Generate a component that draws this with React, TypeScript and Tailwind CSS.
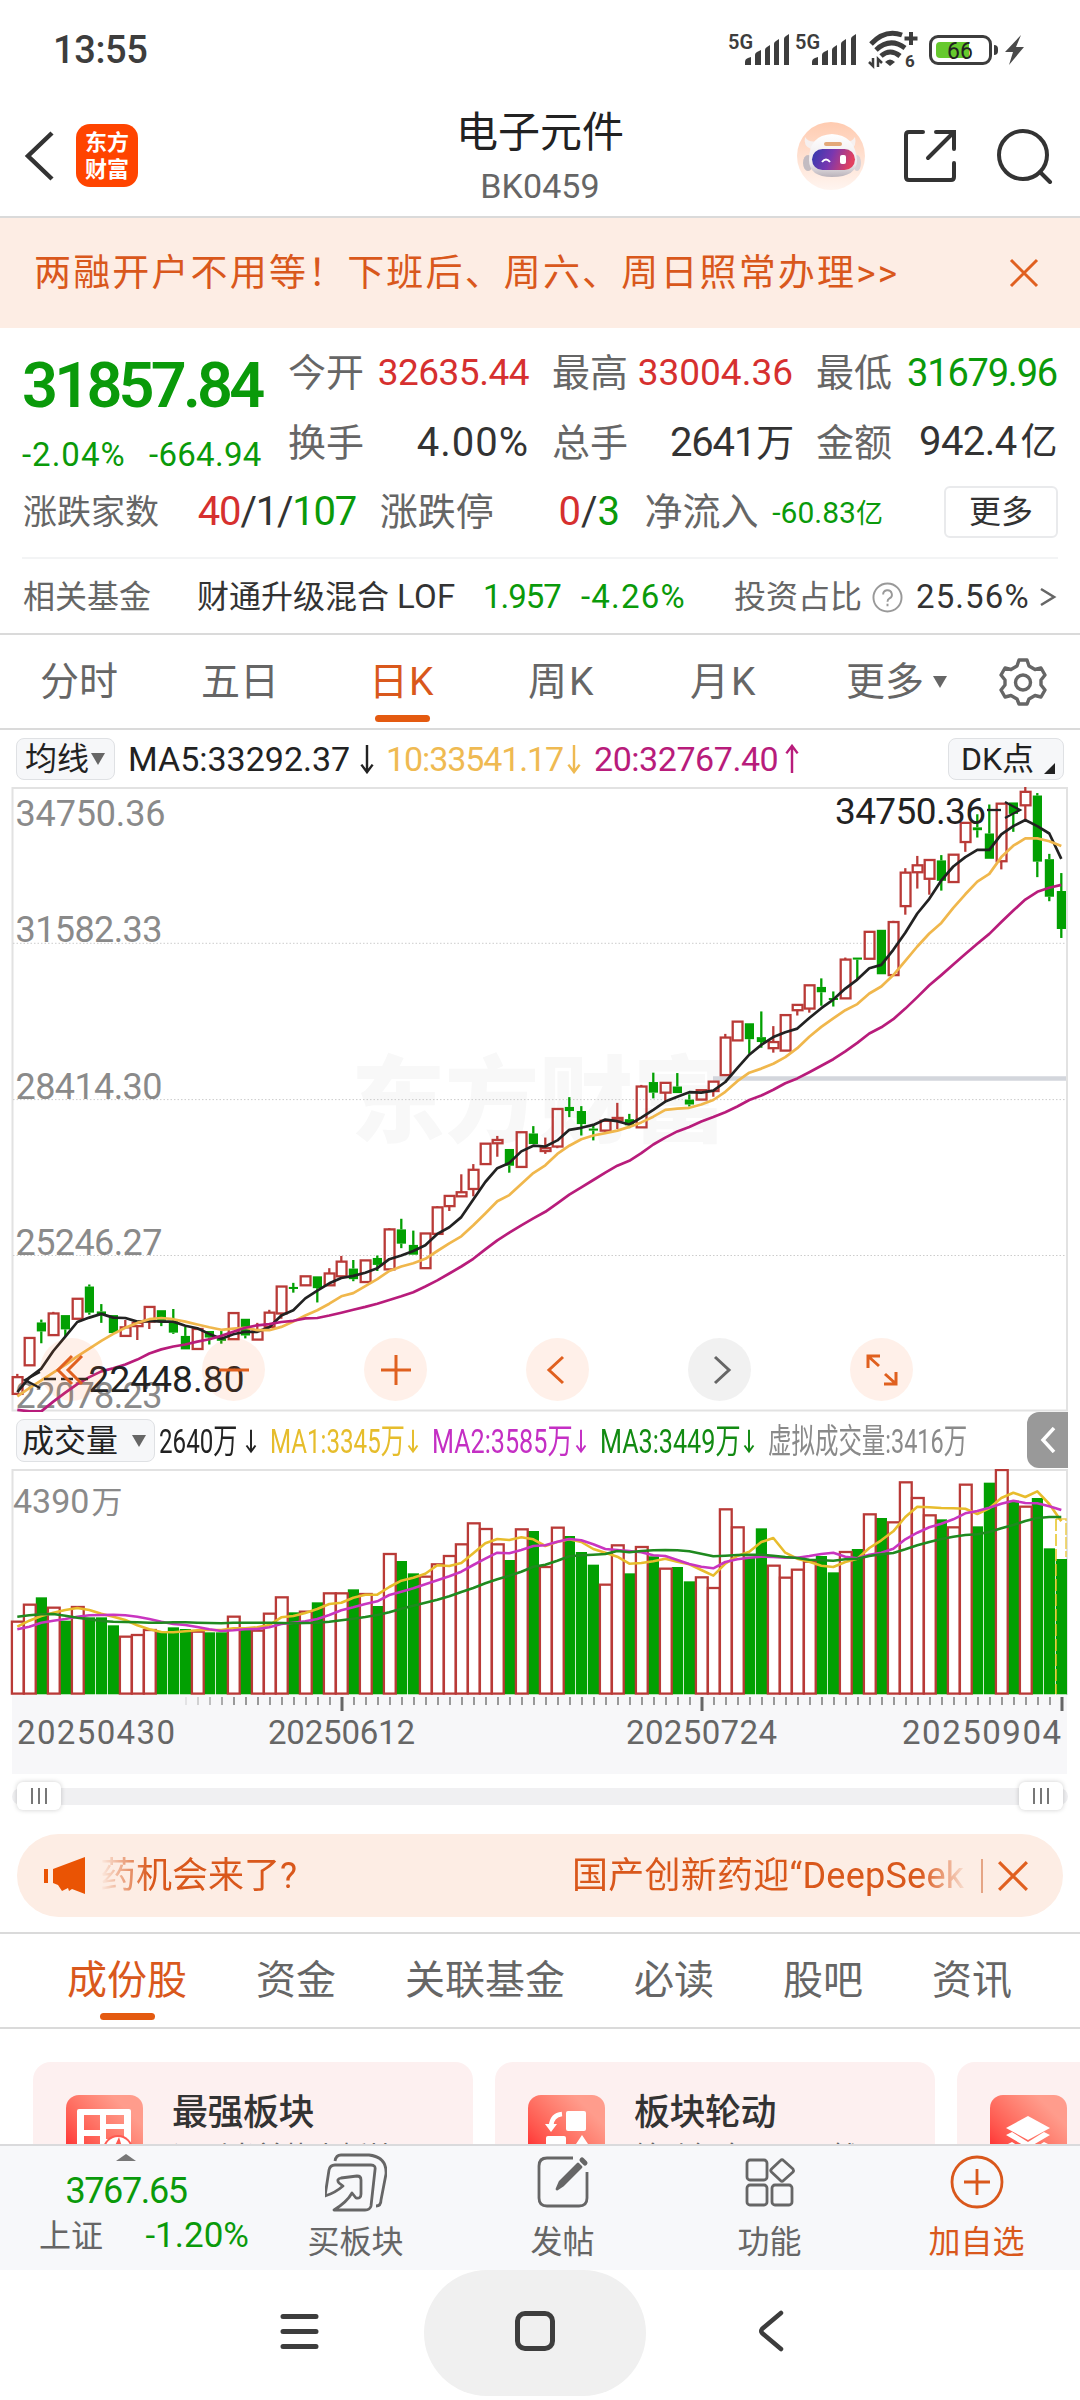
import type { ReactNode } from 'react';

const RED = '#b93a37';
const GREEN = '#02a002';

// up = hollow red, down = solid green; body top, body bottom, high, low
type Candle = ['u' | 'd', number, number, number, number];

const CANDLES: Candle[] = [
    ['u', 1463, 1504, 1455, 1504], ['u', 1367, 1434, 1367, 1434], ['d', 1329, 1351, 1322, 1380], ['u', 1307, 1360, 1303, 1360],
    ['d', 1311, 1346, 1311, 1363], ['u', 1271, 1320, 1271, 1320], ['d', 1241, 1305, 1236, 1310], ['d', 1302, 1310, 1284, 1330],
    ['d', 1311, 1355, 1311, 1355], ['u', 1341, 1362, 1323, 1362], ['u', 1330, 1338, 1330, 1372], ['u', 1291, 1327, 1291, 1345],
    ['d', 1299, 1325, 1299, 1338], ['d', 1325, 1354, 1296, 1357], ['d', 1362, 1395, 1340, 1395], ['u', 1345, 1394, 1345, 1394],
    ['d', 1350, 1366, 1350, 1383], ['d', 1368, 1374, 1350, 1381], ['u', 1306, 1370, 1306, 1370], ['d', 1320, 1361, 1320, 1368],
    ['u', 1350, 1371, 1330, 1371], ['u', 1305, 1340, 1298, 1340], ['u', 1241, 1307, 1241, 1320], ['d', 1242, 1247, 1232, 1256],
    ['u', 1216, 1238, 1216, 1238], ['d', 1216, 1245, 1216, 1280], ['u', 1209, 1238, 1196, 1238], ['u', 1180, 1216, 1166, 1216],
    ['d', 1197, 1223, 1176, 1228], ['u', 1177, 1230, 1177, 1230], ['d', 1171, 1188, 1165, 1203], ['u', 1101, 1199, 1098, 1199],
    ['d', 1101, 1136, 1075, 1147], ['d', 1139, 1163, 1104, 1163], ['u', 1111, 1196, 1111, 1196], ['u', 1047, 1112, 1044, 1112],
    ['u', 1019, 1044, 1019, 1056], ['u', 1010, 1020, 966, 1020], ['u', 955, 1002, 941, 1020], ['u', 891, 941, 891, 941],
    ['u', 882, 890, 872, 923], ['d', 904, 945, 904, 962], ['u', 863, 948, 863, 948], ['d', 866, 892, 848, 892],
    ['u', 902, 909, 876, 916], ['u', 806, 898, 806, 902], ['d', 801, 811, 777, 826], ['d', 811, 843, 799, 871],
    ['d', 854, 859, 845, 883], ['u', 835, 859, 835, 867], ['u', 828, 834, 791, 855], ['d', 831, 846, 818, 853],
    ['u', 751, 851, 747, 851], ['d', 740, 766, 717, 780], ['u', 742, 766, 742, 786], ['d', 751, 767, 718, 767],
    ['d', 783, 795, 770, 800], ['u', 760, 783, 760, 783], ['u', 739, 762, 739, 776], ['u', 631, 723, 622, 723],
    ['u', 592, 638, 592, 638], ['d', 596, 635, 596, 671], ['d', 630, 642, 567, 656], ['u', 642, 657, 603, 668],
    ['u', 576, 663, 576, 663], ['u', 551, 564, 551, 577], ['u', 503, 560, 503, 570], ['d', 507, 520, 486, 553],
    ['d', 534, 539, 518, 555], ['u', 440, 535, 435, 535], ['d', 435, 440, 435, 489], ['u', 372, 438, 372, 438],
    ['d', 367, 476, 367, 476], ['u', 348, 478, 345, 478], ['u', 227, 309, 216, 330], ['u', 209, 226, 186, 266],
    ['u', 196, 242, 196, 281], ['d', 197, 247, 184, 271], ['u', 183, 250, 183, 250], ['u', 105, 152, 105, 176],
    ['d', 116, 123, 84, 141], ['d', 131, 193, 60, 193], ['u', 58, 199, 58, 219], ['d', 55, 83, 55, 127],
    ['u', 29, 62, 17, 97], ['d', 38, 200, 32, 238], ['d', 194, 286, 181, 297], ['d', 272, 365, 228, 387],
];

const MA5 = [
    1500, 1464, 1442, 1399, 1364, 1328, 1317, 1308, 1317, 1318, 1327, 1325, 1327, 1327, 1337, 1343, 1357, 1369, 1358, 1352, 1352, 1341,
    1312, 1299, 1270, 1251, 1233, 1220, 1215, 1207, 1196, 1174, 1165, 1154, 1140, 1112, 1096, 1071, 1028, 985, 951, 938, 910, 896,
    898, 883, 857, 852, 845, 832, 836, 844, 827, 808, 788, 776, 765, 766, 761, 740, 706, 673, 649, 630, 618, 609, 583, 559, 538, 511,
    489, 461, 453, 416, 374, 327, 291, 246, 212, 189, 171, 171, 133, 113, 98, 113, 131, 193,
];
const MA10 = [
    1510, 1490, 1471, 1452, 1433, 1412, 1393, 1374, 1357, 1342, 1330, 1321, 1318, 1321, 1327, 1334, 1341, 1347, 1344, 1342, 1348, 1348,
    1340, 1327, 1312, 1299, 1283, 1265, 1257, 1240, 1223, 1203, 1192, 1184, 1173, 1154, 1135, 1118, 1091, 1062, 1032, 1017, 990, 963,
    944, 916, 896, 880, 871, 865, 859, 850, 839, 825, 808, 805, 803, 795, 784, 764, 738, 717, 707, 695, 679, 657, 629, 605, 584, 564,
    549, 523, 506, 478, 443, 408, 376, 350, 313, 280, 249, 230, 189, 161, 143, 143, 150, 162,
];
const MA20 = [
    1543, 1547, 1547, 1523, 1501, 1480, 1463, 1449, 1441, 1432, 1420, 1405, 1395, 1388, 1383, 1376, 1370, 1362, 1352, 1342, 1336, 1333,
    1328, 1325, 1319, 1318, 1312, 1305, 1298, 1291, 1283, 1274, 1265, 1255, 1241, 1226, 1209, 1192, 1173, 1150, 1128, 1109, 1091, 1074,
    1058, 1037, 1016, 998, 980, 962, 945, 933, 914, 893, 876, 861, 850, 837, 826, 814, 800, 784, 773, 759, 743, 731, 716, 700, 684, 665,
    644, 621, 606, 586, 560, 532, 503, 478, 452, 426, 401, 377, 348, 320, 293, 274, 264, 257,
];

const VOLUMES = [
    635, 584, 562, 593, 632, 591, 622, 622, 646, 680, 675, 660, 664, 652, 657, 665, 667, 667, 620, 660, 662, 611,
    562, 607, 605, 577, 550, 550, 538, 552, 588, 432, 453, 490, 500, 463, 438, 403, 340, 357, 403, 450, 358, 363,
    471, 353, 378, 426, 464, 524, 406, 490, 411, 439, 476, 471, 514, 502, 534, 298, 352, 440, 355, 467, 503, 479,
    455, 438, 487, 426, 417, 313, 324, 337, 217, 264, 316, 328, 352, 224, 349, 218, 180, 272, 290, 264, 415, 447,
];
const VMA1 = [
    650, 632, 618, 608, 600, 594, 600, 611, 620, 630, 646, 658, 666, 667, 664, 661, 660, 660, 655, 655, 652, 645,
    622, 618, 609, 597, 582, 578, 563, 554, 554, 531, 512, 503, 491, 466, 468, 459, 430, 400, 387, 390, 382, 388,
    408, 396, 388, 396, 417, 428, 440, 461, 459, 454, 446, 455, 463, 480, 497, 461, 438, 425, 396, 384, 428, 446,
    455, 467, 471, 456, 446, 414, 391, 364, 321, 290, 292, 294, 295, 296, 312, 295, 264, 248, 261, 244, 282, 334,
];
const VMA2 = [
    658, 650, 638, 632, 627, 620, 616, 615, 614, 616, 620, 627, 635, 642, 645, 651, 658, 663, 661, 658, 657, 652,
    642, 638, 634, 627, 615, 601, 592, 582, 574, 555, 545, 535, 523, 511, 499, 485, 465, 446, 428, 430, 420, 408,
    406, 395, 387, 391, 403, 417, 420, 423, 427, 436, 438, 450, 462, 470, 475, 456, 448, 443, 440, 441, 443, 443,
    438, 432, 428, 440, 445, 434, 428, 416, 388, 368, 352, 341, 328, 310, 303, 293, 281, 272, 279, 280, 289, 300,
];
const VMA3 = [
    620, 616, 613, 612, 617, 623, 628, 633, 635, 636, 637, 638, 638, 637, 637, 638, 639, 640, 638, 638, 638, 638,
    639, 640, 639, 638, 635, 631, 626, 621, 615, 607, 596, 587, 578, 569, 559, 546, 534, 520, 508, 497, 485, 470,
    464, 452, 439, 436, 434, 432, 423, 427, 423, 421, 420, 421, 424, 431, 439, 437, 435, 434, 434, 437, 441, 444,
    449, 451, 452, 448, 446, 438, 433, 429, 418, 406, 396, 387, 380, 375, 373, 366, 355, 345, 333, 324, 321, 321,
];

const cx = (i: number) => 17.3 + i * 12;
const ky = (v: number) => v / 2.45 - 7;
const vy = (v: number) => v / 3 - 59;

const toPoints = (data: number[], y: (v: number) => number) =>
    data.map((v, i) => `${cx(i).toFixed(1)},${y(v).toFixed(1)}`).join(' ');

function DownArrow({ className }: { className: string }) {
    return (
        <svg viewBox="0 0 16 32" className={`shrink-0 ${className}`} fill="none" stroke="currentColor" strokeWidth="2.6">
            <path d="M8 1V30M2 22L8 30L14 22" />
        </svg>
    );
}

function Signal() {
    return (
        <div className="flex h-[34px] w-[67px] items-start text-[#3d3d3d]">
            <span className="w-[17px] whitespace-nowrap text-[20px] font-semibold leading-[18px]">5G</span>
            <svg viewBox="0 0 45 34" className="h-[34px] w-[45px] shrink-0" fill="currentColor">
                <path d="M0 32v-3q0-3 3-4l3-1v8zM10 32V22q0-2 2-3l4-2v15zM20 32V17q0-2 2-3l3-2v20zM29 32V11q0-2 2-3l3-2v26zM39 32V6q0-2 2-3l3-2v31z" />
            </svg>
        </div>
    );
}

function StatusBar() {
    return (
        <div className="flex h-[100px] items-center pl-[53px] text-[#3d3d3d]">
            <span className="w-[675px] text-[38px] font-medium leading-none tracking-[-0.4px]">13:55</span>
            <Signal />
            <Signal />
            <svg viewBox="0 0 52 40" className="-mt-[2px] ml-[6px] h-[40px] w-[52px]" fill="none" stroke="currentColor">
                <path d="M3 15Q17 0 34 6" strokeWidth="5" />
                <path d="M8 21Q22 8 37 19" strokeWidth="5" />
                <path d="M13 27Q22 19 32 27" strokeWidth="5" />
                <path d="M17 33Q22 28 27 33L22 37z" fill="currentColor" stroke="none" />
                <path d="M43 3v13M36.500 9.500h13" strokeWidth="4" />
                <path d="M5 29v8l-4-4M10 38v-8l4 4" strokeWidth="2.500" />
                <text x="37" y="38" fontSize="17" fontWeight="700" fill="currentColor" stroke="none">6</text>
            </svg>
            <div className="ml-[9px] flex h-[30px] w-[63px] items-center rounded-[9px] border-[3px] border-[#3d3d3d] p-[4px]">
                <div className="relative h-full w-[33px] rounded-l-[4px] bg-[#66c92d]">
                    <span className="absolute left-[11px] -top-[2px] text-[23px] leading-[23px] text-[#222]">66</span>
                </div>
            </div>
            <div className="ml-[2px] h-[10px] w-[4px] rounded-r bg-[#3d3d3d]" />
            <svg viewBox="0 0 19 30" className="ml-[7px] h-[30px] w-[19px]" fill="#4a4a4a">
                <path d="M16 0L0 17H8L4 30L19 12H11z" />
            </svg>
        </div>
    );
}

function Robot() {
    return (
        <svg viewBox="0 0 68 68" className="h-[68px] w-[68px]">
            <defs>
                <linearGradient id="halo" x1="0" y1="0" x2="0" y2="1">
                    <stop offset="0" stopColor="#ffcbb0" />
                    <stop offset="1" stopColor="#fff5f0" />
                </linearGradient>
                <linearGradient id="visor" x1="0" y1="0" x2="1" y2="0.2">
                    <stop offset="0" stopColor="#2f3cae" />
                    <stop offset="0.5" stopColor="#7a37b0" />
                    <stop offset="1" stopColor="#e2405f" />
                </linearGradient>
                <linearGradient id="shell" x1="0" y1="0" x2="0" y2="1">
                    <stop offset="0" stopColor="#ffffff" />
                    <stop offset="0.7" stopColor="#ece8ea" />
                    <stop offset="1" stopColor="#b9b2ba" />
                </linearGradient>
            </defs>
            <circle cx="34" cy="34" r="34" fill="url(#halo)" />
            <path d="M8 15q-2 9 6 12l6-8q-8 2-12-4zM58 15q2 9-4 12l-6-8q6 2 10-4z" fill="#f6f0ef" />
            <ellipse cx="11" cy="41" rx="5" ry="8" fill="#c3bcc2" />
            <ellipse cx="60" cy="41" rx="4" ry="8" fill="#d9d2d6" />
            <path d="M12 38Q12 13 35 12Q58 13 60 38Q60 55 35 55Q12 55 12 38z" fill="url(#shell)" />
            <rect x="15" y="27" width="43" height="21" rx="10.500" fill="url(#visor)" />
            <rect x="27" y="20" width="18" height="4" rx="2" fill="#e3a878" />
            <path d="M25 40q4-5 8 0" fill="none" stroke="#fff" strokeWidth="2" />
            <rect x="43" y="33" width="6" height="9" rx="2" fill="#fff" />
        </svg>
    );
}

function Header() {
    return (
        <header className="flex h-[118px] items-center border-b-2 border-[#dadada] pl-[24px]">
            <svg viewBox="0 0 30 50" className="mt-[-5px] h-[50px] w-[30px]" fill="none" stroke="#333" strokeWidth="4.500">
                <path d="M28 2L4 25L28 48" />
            </svg>
            <div className="mt-[-5px] ml-[22px] flex h-[63px] w-[62px] flex-col items-center justify-center rounded-[14px] bg-[#ff4400] text-[22px] font-bold leading-[27px] text-white">
                <span>东方</span>
                <span>财富</span>
            </div>
            <div className="ml-[202px] flex w-[400px] flex-col items-center">
                <h1 className="text-[42px] leading-[50px] text-[#222]">电子元件</h1>
                <p className="mt-[6px] text-[34px] leading-[44px] tracking-[0.100px] text-[#666]">BK0459</p>
            </div>
            <div className="mt-[-4px] ml-[57px]">
                <Robot />
            </div>
            <svg viewBox="0 0 54 54" className="mt-[-4px] ml-[38px] h-[54px] w-[54px]" fill="none" stroke="#333" strokeWidth="4" strokeLinecap="round">
                <path d="M20 3H6Q3 3 3 6V48Q3 51 6 51H48Q51 51 51 48V34M33 3H51V20M50 4L25 29" />
            </svg>
            <svg viewBox="0 0 56 56" className="mt-[-4px] ml-[40px] h-[56px] w-[56px]" fill="none" stroke="#333" strokeWidth="4" strokeLinecap="round">
                <circle cx="26" cy="27" r="24" />
                <path d="M43 44L53 54" />
            </svg>
        </header>
    );
}

function Close({ className }: { className: string }) {
    return (
        <svg viewBox="0 0 30 30" className={className} fill="none" stroke="#e06020" strokeWidth="3">
            <path d="M2 2L28 28M28 2L2 28" />
        </svg>
    );
}

function Banner() {
    return (
        <div className="flex h-[110px] items-center bg-[#fdede4] pl-[34px] text-[#d9581c]">
            <span className="w-[975px] whitespace-nowrap text-[37px] leading-none tracking-[2.150px]">
                两融开户不用等！下班后、周六、周日照常办理&gt;&gt;
            </span>
            <Close className="h-[30px] w-[30px]" />
        </div>
    );
}

function Stat({ label, children }: { label: string; children: ReactNode }) {
    return (
        <div className="flex items-center justify-between whitespace-nowrap">
            <span className="-ml-[1px] text-[38px] leading-[50px] text-[#666]">{label}</span>
            {children}
        </div>
    );
}

function Quote() {
    return (
        <section className="h-[307px] border-b-2 border-[#dadada] px-[22px] pt-[20px]">
            <div className="flex h-[126px]">
                <div className="w-[267px] text-[#0a9a0a]">
                    <div className="mt-[8px] text-[63px] font-semibold leading-[60px] tracking-[-3.800px]">31857.84</div>
                    <div className="mt-[19px] flex text-[33px] leading-[40px]">
                        <span className="w-[127px] tracking-[1px]">-2.04%</span>
                        <span className="tracking-[0.300px]">-664.94</span>
                    </div>
                </div>
                <div className="grid w-[768px] grid-cols-3 content-start gap-x-[24px] gap-y-[19px] text-[#333]">
                    <Stat label="今开">
                        <span className="text-[37px] leading-[50px] tracking-[-0.500px] text-[#d6302f]">32635.44</span>
                    </Stat>
                    <Stat label="最高">
                        <span className="text-[37px] leading-[50px] text-[#d6302f]">33004.36</span>
                    </Stat>
                    <Stat label="最低">
                        <span className="text-[38px] leading-[50px] tracking-[-1.200px] text-[#0a9a0a]">31679.96</span>
                    </Stat>
                    <Stat label="换手">
                        <span className="text-[40px] leading-[50px] tracking-[1px]">4.00%</span>
                    </Stat>
                    <Stat label="总手">
                        <span className="text-[40px] leading-[50px] tracking-[-1.200px]">2641<span className="ml-[1px] text-[38px]">万</span></span>
                    </Stat>
                    <Stat label="金额">
                        <span className="text-[40px] leading-[50px] tracking-[-0.600px]">942.4<span className="ml-[4px] text-[37px]">亿</span></span>
                    </Stat>
                </div>
            </div>
            <div className="mt-[11px] flex h-[54px] items-center whitespace-nowrap text-[#333]">
                <span className="w-[176px] pl-[1px] text-[34px] text-[#666]">涨跌家数</span>
                <span className="w-[182px] text-[40px] tracking-[-1.200px]">
                    <b className="font-normal text-[#d6302f]">40</b>/1/<b className="font-normal text-[#0a9a0a]">107</b>
                </span>
                <span className="w-[179px] text-[38px] text-[#666]">涨跌停</span>
                <span className="w-[86px] text-[40px]">
                    <b className="font-normal text-[#d6302f]">0</b>/<b className="font-normal text-[#0a9a0a]">3</b>
                </span>
                <span className="w-[128px] text-[38px] text-[#666]">净流入</span>
                <span className="w-[172px] text-[30px] text-[#0a9a0a]">-60.83<span className="text-[27px]">亿</span></span>
                <button className="h-[52px] w-[114px] rounded-[6px] border-2 border-[#e9eaec] text-[32px] leading-[46px]">更多</button>
            </div>
            <div className="mt-[18px] h-[2px] bg-[#f3f4f5]" />
            <div className="flex h-[76px] items-center whitespace-nowrap text-[32px] text-[#333]">
                <span className="w-[175px] pl-[1px] text-[#666]">相关基金</span>
                <span className="w-[286px]">财通升级混合<span className="ml-[8px] text-[33px] tracking-[0.300px]">LOF</span></span>
                <span className="w-[98px] text-[33px] tracking-[-1px] text-[#0a9a0a]">1.957</span>
                <span className="w-[153px] text-[33px] tracking-[1.200px] text-[#0a9a0a]">-4.26%</span>
                <span className="w-[138px] text-[#666]">投资占比</span>
                <svg viewBox="0 0 32 32" className="mr-[13px] h-[31px] w-[31px]" fill="none" stroke="#999" strokeWidth="2">
                    <circle cx="16" cy="16" r="14.500" />
                    <path d="M11.500 13a4.500 4.500 0 1 1 6.500 4q-2 1-2 3.500M16 22.500v2.500" />
                </svg>
                <span className="w-[123px] text-[33px] tracking-[1.100px]">25.56%</span>
                <svg viewBox="0 0 18 20" className="h-[20px] w-[18px]" fill="none" stroke="#666" strokeWidth="2.600">
                    <path d="M2 2L15 10L2 18" />
                </svg>
            </div>
        </section>
    );
}

function Gear() {
    return (
        <svg viewBox="0 0 48 48" className="h-[48px] w-[48px]" fill="none" stroke="#666" strokeWidth="3.400" strokeLinejoin="round">
            <path d="M20 2H28L30 8L36 11.500L42 10L46 17L42 22V27L46 32L42 39L36 37.500L30 41L28 46H20L18 41L12 37.500L6 39L2 32L6 27V22L2 17L6 10L12 11.500L18 8z" />
            <circle cx="24" cy="24.500" r="7.500" />
        </svg>
    );
}

function PeriodTabs() {
    return (
        <nav className="flex h-[95px] items-center whitespace-nowrap border-b-2 border-[#dadada] pl-[40px] text-[39px] leading-[60px] text-[#666]">
            <span className="w-[161px]">分时</span>
            <span className="w-[168px]">五日</span>
            <span className="relative w-[159px] tracking-[1px] text-[#d9581c]">
                日K
                <i className="absolute -bottom-[10px] left-[6px] h-[7px] w-[55px] rounded-full bg-[#e45a10]" />
            </span>
            <span className="w-[162px] tracking-[2px]">周K</span>
            <span className="w-[156px] tracking-[2px]">月K</span>
            <span className="w-[87px]">更多</span>
            <svg viewBox="0 0 14 12" className="mr-[52px] h-[12px] w-[14px]" fill="#666">
                <path d="M0 0H14L7 12z" />
            </svg>
            <Gear />
        </nav>
    );
}

function Averages() {
    return (
        <div className="flex h-[57px] items-center whitespace-nowrap pl-[16px] text-[34px] leading-[40px]">
            <div className="mr-[13px] flex h-[42px] w-[99px] items-center rounded-[8px] border border-[#dfe1e4] bg-[#f6f7f9] pl-[8px] text-[32px] text-[#222]">
                均线
                <svg viewBox="0 0 14 12" className="ml-[2px] h-[12px] w-[14px]" fill="#666">
                    <path d="M0 0H14L7 12z" />
                </svg>
            </div>
            <span className="w-[231px] text-[#222]">MA5:33292.37</span>
            <DownArrow className="h-[30px] w-[16px] text-[#222]" />
            <span className="ml-[11px] w-[180px] tracking-[-1.100px] text-[#efba52]">10:33541.17</span>
            <DownArrow className="h-[30px] w-[16px] text-[#efba52]" />
            <span className="ml-[12px] w-[190px] tracking-[-0.450px] text-[#b81c7b]">20:32767.40</span>
            <DownArrow className="h-[30px] w-[16px] rotate-180 text-[#b81c7b]" />
            <div className="ml-[148px] flex h-[42px] w-[116px] items-center rounded-[8px] border border-[#dfe1e4] bg-[#f6f7f9] pl-[12px] text-[32px] text-[#222]">
                DK点
                <svg viewBox="0 0 12 12" className="mt-[20px] ml-[10px] h-[11px] w-[11px]" fill="#222">
                    <path d="M12 0V12H0z" />
                </svg>
            </div>
        </div>
    );
}

const PRICE_LABELS: [string, number, number][] = [
    ['34750.36', 38.5, 150], ['31582.33', 155, 147], ['28414.30', 312, 147], ['25246.27', 468, 147], ['22078.23', 620.5, 147],
];

function ChartButton({ gray, children }: { gray?: boolean; children: ReactNode }) {
    return (
        <button className={`flex h-[63px] w-[63px] items-center justify-center rounded-full ${gray ? 'bg-[#777]/10 text-[#666]' : 'bg-[#ff6a20]/10 text-[#e0601f]'}`}>
            <svg viewBox="0 0 36 36" className="h-[36px] w-[36px]" fill="none" stroke="currentColor" strokeWidth="3">
                {children}
            </svg>
        </button>
    );
}

function KLine() {
    return (
        <div className="relative h-[625px]">
            <svg viewBox="0 0 1080 625" className="block h-[625px] w-[1080px]">
                <text x="351" y="348" fontSize="94" fontWeight="900" fill="#f8f8f8">东方财富</text>
                <rect x="12.500" y="1" width="1054.500" height="622.500" fill="none" stroke="#e2e2e2" strokeWidth="2" />
                {[156.300, 312.600, 468.500].map((y) => (
                    <path key={y} d={`M13 ${y}H1066`} stroke="#ccc" strokeWidth="1" strokeDasharray="1.500 2" />
                ))}
                <path d="M713 291.400H1066" stroke="#d3d6dc" strokeWidth="4.500" />
                {PRICE_LABELS.map(([label, y, w]) => (
                    <text key={label} x="15.500" y={y} fontSize="36" fill="#8a8a8a" textLength={w}>{label}</text>
                ))}
                {CANDLES.map(([dir, top, bottom, high, low], i) => {
                    const color = dir === 'u' ? RED : GREEN;
                    const t = ky(top);
                    const b = ky(bottom);
                    return (
                        <g key={i}>
                            {high < top && <path d={`M${cx(i)} ${ky(high)}V${t}`} stroke={color} strokeWidth="2.300" />}
                            {low > bottom && <path d={`M${cx(i)} ${b}V${ky(low)}`} stroke={color} strokeWidth="2.300" />}
                            {dir === 'u' ? (
                                <rect x={cx(i) - 4.600} y={t} width="9.800" height={Math.max(b - t, 1)} fill="none" stroke={color} strokeWidth="2.300" />
                            ) : (
                                <rect x={cx(i) - 4.500} y={t} width="9.200" height={Math.max(b - t, 2)} fill={color} />
                            )}
                        </g>
                    );
                })}
                <g fill="none" strokeWidth="2.700" strokeLinejoin="round">
                    <polyline points={toPoints(MA5, ky)} stroke="#222" />
                    <polyline points={toPoints(MA10, ky)} stroke="#f0b74c" />
                    <polyline points={toPoints(MA20, ky)} stroke="#b81c7b" />
                </g>
                <g fill="none" stroke="#222" strokeWidth="2.300">
                    <path d="M40 585L25 593L40 601" />
                    <path d="M44 592H88" strokeDasharray="12 5" />
                    <path d="M1005 15L1020 23L1005 31" />
                    <path d="M987 23H1001" />
                </g>
                <text x="88.500" y="605" fontSize="37" fill="#222" textLength="156">22448.80</text>
                <text x="835" y="36.500" fontSize="37" fill="#222" textLength="151">34750.36</text>
            </svg>
            <div className="absolute left-[40px] top-[551px] flex gap-[99px]">
                <ChartButton>
                    <path d="M18 4L4 18L18 32M28 4L14 18L28 32" />
                </ChartButton>
                <ChartButton>
                    <path d="M3 18H33" />
                </ChartButton>
                <ChartButton>
                    <path d="M3 18H33M18 3V33" />
                </ChartButton>
                <ChartButton>
                    <path d="M23 5L9 18L23 31" />
                </ChartButton>
                <ChartButton gray>
                    <path d="M13 5L27 18L13 31" />
                </ChartButton>
                <ChartButton>
                    <path d="M4 16V4H16M5 5L15 14M32 20V32H20M31 31L21 22" />
                </ChartButton>
            </div>
        </div>
    );
}

function VolumeHeader() {
    return (
        <div className="flex h-[57px] items-center whitespace-nowrap pl-[16px] text-[34px] leading-[42px]">
            <div className="mr-[4px] flex h-[43px] w-[139px] shrink-0 items-center rounded-[8px] border border-[#dfe1e4] bg-[#f6f7f9] pl-[5px] text-[32px] text-[#222]">
                成交量
                <svg viewBox="0 0 14 12" className="ml-[14px] h-[12px] w-[14px]" fill="#666">
                    <path d="M0 0H14L7 12z" />
                </svg>
            </div>
            <span className="w-[86px] shrink-0 text-[#222]"><span className="inline-block origin-left scale-x-[0.710]">2640万</span></span>
            <DownArrow className="h-[32px] w-[12px] text-[#222]" />
            <span className="ml-[13px] w-[137px] shrink-0 text-[#e6bd2c]"><span className="inline-block origin-left scale-x-[0.710]">MA1:3345万</span></span>
            <DownArrow className="h-[32px] w-[12px] text-[#e6bd2c]" />
            <span className="ml-[13px] w-[143px] shrink-0 text-[#c42fc4]"><span className="inline-block origin-left scale-x-[0.740]">MA2:3585万</span></span>
            <DownArrow className="h-[32px] w-[12px] text-[#c42fc4]" />
            <span className="ml-[13px] w-[143px] shrink-0 text-[#128a12]"><span className="inline-block origin-left scale-x-[0.740]">MA3:3449万</span></span>
            <DownArrow className="h-[32px] w-[12px] text-[#128a12]" />
            <span className="ml-[13px] w-[259px] shrink-0 text-[#8a8a8a]"><span className="inline-block origin-left scale-x-[0.690]">虚拟成交量:3416万</span></span>
            <div className="-mt-[1px] flex h-[56px] w-[41px] shrink-0 items-center justify-center rounded-l-[12px] bg-[#999]">
                <svg viewBox="0 0 16 26" className="h-[26px] w-[16px]" fill="none" stroke="#fff" strokeWidth="3.500">
                    <path d="M14 1L3 13L14 25" />
                </svg>
            </div>
        </div>
    );
}

const DATES: [string, number, number][] = [
    ['20250430', 17, 158], ['20250612', 268, 147], ['20250724', 626, 151], ['20250904', 902, 159],
];

function Volume() {
    return (
        <svg viewBox="0 0 1080 305" className="block h-[305px] w-[1080px]">
            <rect x="12" y="226" width="1055" height="79" fill="#f7f7f9" />
            <path d="M12.500 226V1H1067V226" fill="none" stroke="#e2e2e2" strokeWidth="2" />
            <text x="13" y="44" fontSize="34" fill="#8a8a8a">4390<tspan fontSize="31" dx="2">万</tspan></text>
            {VOLUMES.map((v, i) => {
                const top = vy(v);
                return CANDLES[i][0] === 'd' ? (
                    <rect key={i} x={cx(i) - 5.500} y={top} width="11.200" height={225.300 - top} fill={GREEN} />
                ) : null;
            })}
            {VOLUMES.map((v, i) => {
                const top = vy(v);
                return CANDLES[i][0] === 'u' ? (
                    <rect key={i} x={cx(i) - 5.400} y={top} width="11.800" height={224.600 - top} fill="#fff" stroke={RED} strokeWidth="2.300" />
                ) : null;
            })}
            {/* projected volume for the open session */}
            <path d="M1056 50H1066V88" fill="none" stroke="#eccb4c" strokeWidth="1.500" strokeDasharray="12 2" />
            <path d="M1056 50V225" stroke="#e6c21e" strokeWidth="1.500" strokeDasharray="12 3" />
            <g fill="none" strokeWidth="2.600" strokeLinejoin="round">
                <polyline points={toPoints(VMA1, vy)} stroke="#e8bc2c" />
                <polyline points={toPoints(VMA2, vy)} stroke="#c935c0" />
                <polyline points={toPoints(VMA3, vy)} stroke="#1f8a1f" />
            </g>
            {Array.from({ length: 73 }, (_, n) => n + 14).map((i) => (
                <path key={i} d={`M${cx(i) + 0.700} 228V236`} stroke="#999" strokeWidth="2" opacity={Math.min(1, (i - 13) / 5)} />
            ))}
            {[342, 702, 1062].map((x) => (
                <path key={x} d={`M${x} 228V242`} stroke="#666" strokeWidth="3" />
            ))}
            {DATES.map(([date, x, w]) => (
                <text key={date} x={x} y="275" fontSize="33" fill="#666" textLength={w}>{date}</text>
            ))}
        </svg>
    );
}

function RangeHandle() {
    return (
        <div className="flex h-[28px] w-[44px] items-center justify-center gap-[5px] rounded-[6px] bg-white shadow-[0_0_5px_rgba(0,0,0,0.2)]">
            <i className="h-[16px] w-[2px] bg-[#777]" />
            <i className="h-[16px] w-[2px] bg-[#777]" />
            <i className="h-[16px] w-[2px] bg-[#777]" />
        </div>
    );
}

function RangeSlider() {
    return (
        <div className="flex h-[60px] items-center px-[12px] pb-[16px]">
            <div className="flex h-[17px] w-[1056px] items-center justify-between rounded-full bg-[#f0f0f2] px-[5px]">
                <RangeHandle />
                <RangeHandle />
            </div>
        </div>
    );
}

function Ticker() {
    return (
        <div className="mx-[17px] flex h-[83px] items-center rounded-full bg-[#fdede4] pl-[27px] text-[36px] leading-none text-[#d9581c]">
            <svg viewBox="0 0 43 37" className="mr-[13px] h-[37px] w-[43px] shrink-0" fill="#ea5404">
                <path d="M0 12h4v14H0zM9 12L41 0V37L28 32L25 34L24 31L18 34L14 28L9 26z" />
            </svg>
            <div className="flex h-[56px] w-[870px] items-center overflow-hidden whitespace-nowrap [mask-image:linear-gradient(to_right,transparent,#000_50px,#000_820px,transparent)]">
                <span className="w-[472px]">药机会来了?</span>
                <span className="tracking-[0.250px]">国产创新药迎“DeepSeek</span>
            </div>
            <i className="mr-[14px] ml-[11px] h-[34px] w-[2px] shrink-0 bg-[#e5a585]" />
            <Close className="h-[32px] w-[32px] shrink-0" />
        </div>
    );
}

function SectionTabs() {
    return (
        <nav className="mt-[15px] flex h-[97px] items-center gap-[69px] whitespace-nowrap border-y-2 border-[#dadada] pl-[67px] text-[40px] leading-[60px] text-[#666]">
            <span className="relative text-[#d9581c]">
                成份股
                <i className="absolute -bottom-[9px] left-[33px] h-[7px] w-[55px] rounded-full bg-[#e45a10]" />
            </span>
            <span>资金</span>
            <span>关联基金</span>
            <span>必读</span>
            <span>股吧</span>
            <span>资讯</span>
        </nav>
    );
}

function Card({ title, note, children }: { title?: string; note?: string; children: ReactNode }) {
    return (
        <div className="flex h-[140px] w-[440px] shrink-0 rounded-[18px] bg-[#fdf0f0] pt-[33px] pl-[33px]">
            <svg viewBox="0 0 77 77" className="h-[77px] w-[77px] shrink-0 rounded-[13px] bg-linear-to-tr from-[#ff3a3a] from-20% to-[#ff9c8c] to-80%">
                {children}
            </svg>
            <div className="ml-[29px] whitespace-nowrap">
                <h3 className="text-[36px] font-medium leading-[36px] tracking-[-0.500px] text-[#333]">{title}</h3>
                <p className="mt-[11px] text-[28px] leading-[32px] text-[#666]">{note}</p>
            </div>
        </div>
    );
}

function Cards() {
    return (
        <div className="flex h-[115px] gap-[22px] overflow-hidden pt-[33px] pl-[33px]">
            <Card title="最强板块" note="识别当前热点板块">
                <path fillRule="evenodd" fill="#fff" d="M13 14H63Q65 14 65 16V66H11V16Q11 14 13 14zM18 20V35H34V20zM40 20V29H58V20zM18 41V52H34V41zM40 34V44H58V34z" />
                <circle cx="52" cy="55" r="15" fill="#ff5a52" />
                <circle cx="52" cy="55" r="13" fill="#fff" />
                <path d="M53 42L47 55H57z" fill="#ff5a52" />
            </Card>
            <Card title="板块轮动" note="轮动复盘一目了然">
                <rect x="38" y="16" width="20" height="20" rx="2" fill="#fff" />
                <rect x="18" y="41" width="20" height="20" rx="2" fill="#fff" />
                <path d="M34 19Q24 20 23 31" fill="none" stroke="#fff" strokeWidth="4.500" />
                <path d="M17 29H29L23 37zM48 49H60L54 40z" fill="#fff" />
                <path d="M54 47V58" stroke="#fff" strokeWidth="4" />
            </Card>
            <Card>
                <path d="M38 21L60 33L38 45L16 33z" fill="#fff" />
                <path d="M16 40L22 37L38 47L54 37L60 40L38 53zM16 50L22 47L38 57L54 47L60 50L38 63z" fill="#fff" />
            </Card>
        </div>
    );
}

function NavItem({ label, active, children }: { label: string; active?: boolean; children: ReactNode }) {
    return (
        <div className={`flex w-[207px] shrink-0 flex-col items-center pt-[6px] text-[32px] leading-[40px] ${active ? 'text-[#d9581c]' : 'text-[#666]'}`}>
            <svg viewBox="0 0 62 62" className="h-[62px] w-[62px]" fill="none" stroke="currentColor" strokeWidth="2.800" strokeLinejoin="round">
                {children}
            </svg>
            <span className="mt-[8px]">{label}</span>
        </div>
    );
}

function BottomBar() {
    return (
        <div className="flex h-[126px] border-t-2 border-[#dadadc] bg-[#f7f8fa]">
            <div className="flex w-[252px] shrink-0 flex-col items-center pt-[8px]">
                <svg viewBox="0 0 20 7" className="h-[7px] w-[20px]" fill="#777">
                    <path d="M10 0L20 7H0z" />
                </svg>
                <span className="mt-[5px] text-[36px] leading-[50px] tracking-[-1.400px] text-[#0a9a0a]">3767.65</span>
                <div className="mt-[-2px] ml-[39px] flex w-[210px] items-center justify-between self-start whitespace-nowrap leading-[44px]">
                    <span className="text-[32px] text-[#666]">上证</span>
                    <span className="text-[35px] text-[#0a9a0a]">-1.20%</span>
                </div>
            </div>
            <NavItem label="买板块">
                <path d="M10 9Q11 3 16 3H44Q62 5 61 22L56 48Q56 54 51 54" />
                <path d="M0 44L4 18Q5 13 10 13H46Q51 13 50 18L46 54Q45 58 40 58H9Q22 50 27 41L31 46Q36 47 36 42V28Q36 24 32 24L16 26Q11 27 14 31L18 34Q10 41 0 44z" />
            </NavItem>
            <NavItem label="发帖">
                <path d="M41 6H15Q7 6 7 14V46Q7 54 15 54H47Q55 54 55 46V20" />
                <path d="M25 37L28 30L46 12L49 15L31 33z" fill="currentColor" />
                <path d="M50 8L53 11" strokeWidth="5" strokeLinecap="round" />
            </NavItem>
            <NavItem label="功能">
                <rect x="8" y="8" width="20" height="20" rx="3" />
                <rect x="8" y="33" width="20" height="20" rx="3" />
                <rect x="33" y="33" width="20" height="20" rx="3" />
                <path d="M41.500 8.500Q43 7 44.500 8.500L54 17Q55 18.500 54 20L44.500 28.500Q43 30 41.500 28.500L32.500 20Q31 18.500 32.500 17z" />
            </NavItem>
            <NavItem label="加自选" active>
                <circle cx="31" cy="30" r="25" />
                <path d="M18 30H44M31 17V43" />
            </NavItem>
        </div>
    );
}

function SystemNav() {
    return (
        <div className="flex h-[130px] items-start">
            <svg viewBox="0 0 40 38" className="mt-[43px] ml-[280px] h-[38px] w-[40px]" stroke="#3d3d3d" strokeWidth="5" strokeLinecap="round">
                <path d="M3 3.500H36M3 18.500H36M3 33.500H36" />
            </svg>
            <div className="ml-[104px] flex h-[126px] w-[222px] items-center justify-center rounded-[63px] bg-[#f0f0f0]">
                <div className="-mt-[4px] h-[40px] w-[40px] rounded-[10px] border-[5px] border-[#3d3d3d]" />
            </div>
            <svg viewBox="0 0 26 42" className="mt-[40px] ml-[112px] h-[42px] w-[26px]" fill="none" stroke="#3d3d3d" strokeWidth="4.500" strokeLinecap="round" strokeLinejoin="round">
                <path d="M23 3L4 19Q2.500 21 4 23L23 39" />
            </svg>
        </div>
    );
}

export default function App() {
    return (
        <div className="h-[2400px] w-[1080px] overflow-hidden bg-white font-['Roboto','Noto_Sans_CJK_SC',sans-serif]">
            <StatusBar />
            <Header />
            <Banner />
            <Quote />
            <PeriodTabs />
            <Averages />
            <KLine />
            <VolumeHeader />
            <Volume />
            <RangeSlider />
            <Ticker />
            <SectionTabs />
            <Cards />
            <BottomBar />
            <SystemNav />
        </div>
    );
}
